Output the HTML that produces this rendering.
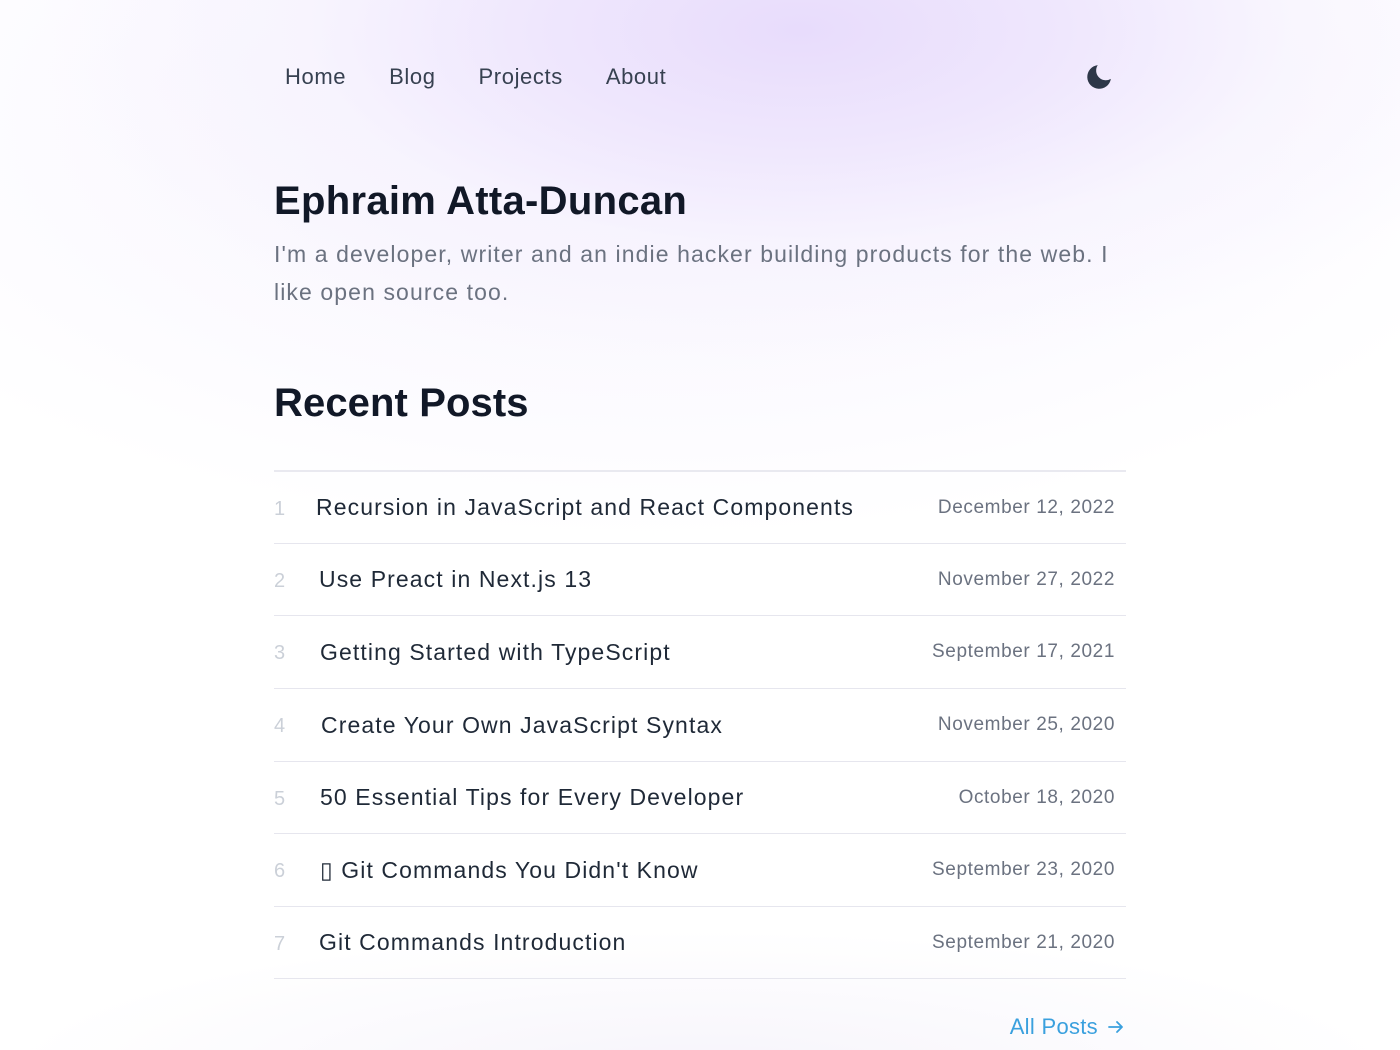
<!DOCTYPE html>
<html><head><meta charset="utf-8"><style>
html,body{margin:0;padding:0;overflow:hidden;width:1400px;height:1050px}
body{font-family:"Liberation Sans",sans-serif;position:relative;
background:
radial-gradient(ellipse 760px 330px at 800px 30px,#e8dcfc 0%,#efe7fd 35%,rgba(246,242,254,0.6) 65%,rgba(255,255,255,0) 100%),
radial-gradient(ellipse 900px 420px at 650px 120px,rgba(245,241,254,0.9) 0%,rgba(255,255,255,0) 100%),
radial-gradient(ellipse 700px 150px at 700px 1080px,#f6f4fb 0%,rgba(255,255,255,0) 100%),
#fff}
.wrap{position:absolute;left:274px;width:852px;top:0;height:1050px}
nav{position:absolute;top:64px;left:11px;font-size:22px;color:#374151;letter-spacing:0.6px}
nav span{margin-right:43px}
.moon{position:absolute;left:810px;top:62px}
h1{position:absolute;top:179px;margin:0;font-size:40px;font-weight:700;color:#111827;letter-spacing:0.3px}
p.sub{position:absolute;top:235px;margin:0;font-size:23px;line-height:38px;color:#6b7280;width:880px;letter-spacing:1.1px;white-space:nowrap}
h2{position:absolute;top:381px;margin:0;font-size:40px;font-weight:700;color:#111827;letter-spacing:0.1px}
ul{position:absolute;top:470px;left:0;width:852px;margin:0;padding:0;list-style:none;border-top:2px solid #e9e9f0}
li{height:71px;border-bottom:1px solid #e6e6ee;display:flex;align-items:center;position:relative}
li.h{height:72px}
.n{font-size:20px;color:#cbd0d8;width:45px;padding-top:3px}
.t{font-size:23px;color:#1f2937;letter-spacing:1.1px}
.d{position:absolute;right:11px;font-size:19px;color:#6b7280;letter-spacing:0.6px}
.all{position:absolute;top:1014px;right:0;font-size:22px;color:#3aa0de;letter-spacing:0.3px;display:flex;align-items:center}
</style></head><body>
<div class="wrap">
<nav><span>Home</span><span>Blog</span><span>Projects</span><span>About</span></nav>
<svg class="moon" width="30" height="30" viewBox="0 0 24 24"><path d="M11 2.5a7.8 7.8 0 0 0 10.5 11A9.5 9.5 0 1 1 11 2.5z" fill="#2d3748"/></svg>
<h1>Ephraim Atta-Duncan</h1>
<p class="sub">I'm a developer, writer and an indie hacker building products for the web. I<br>like open source too.</p>
<h2>Recent Posts</h2>
<ul>
<li><span class="n">1</span><span class="t" style="margin-left:-3px">Recursion in JavaScript and React Components</span><span class="d">December 12, 2022</span></li>
<li><span class="n">2</span><span class="t">Use Preact in Next.js 13</span><span class="d">November 27, 2022</span></li>
<li class="h"><span class="n">3</span><span class="t" style="margin-left:1px">Getting Started with TypeScript</span><span class="d">September 17, 2021</span></li>
<li class="h"><span class="n">4</span><span class="t" style="margin-left:2px">Create Your Own JavaScript Syntax</span><span class="d">November 25, 2020</span></li>
<li><span class="n">5</span><span class="t" style="margin-left:1px">50 Essential Tips for Every Developer</span><span class="d">October 18, 2020</span></li>
<li class="h"><span class="n">6</span><span class="t" style="margin-left:1px">▯ Git Commands You Didn't Know</span><span class="d">September 23, 2020</span></li>
<li><span class="n">7</span><span class="t">Git Commands Introduction</span><span class="d">September 21, 2020</span></li>
</ul>
<div class="all">All Posts<svg width="20" height="20" viewBox="0 0 20 20" style="margin-left:8px"><path d="M3 10h13M11 5l5 5-5 5" stroke="#3aa0de" stroke-width="1.8" fill="none" stroke-linecap="round" stroke-linejoin="round"/></svg></div>
</div>
</body></html>
